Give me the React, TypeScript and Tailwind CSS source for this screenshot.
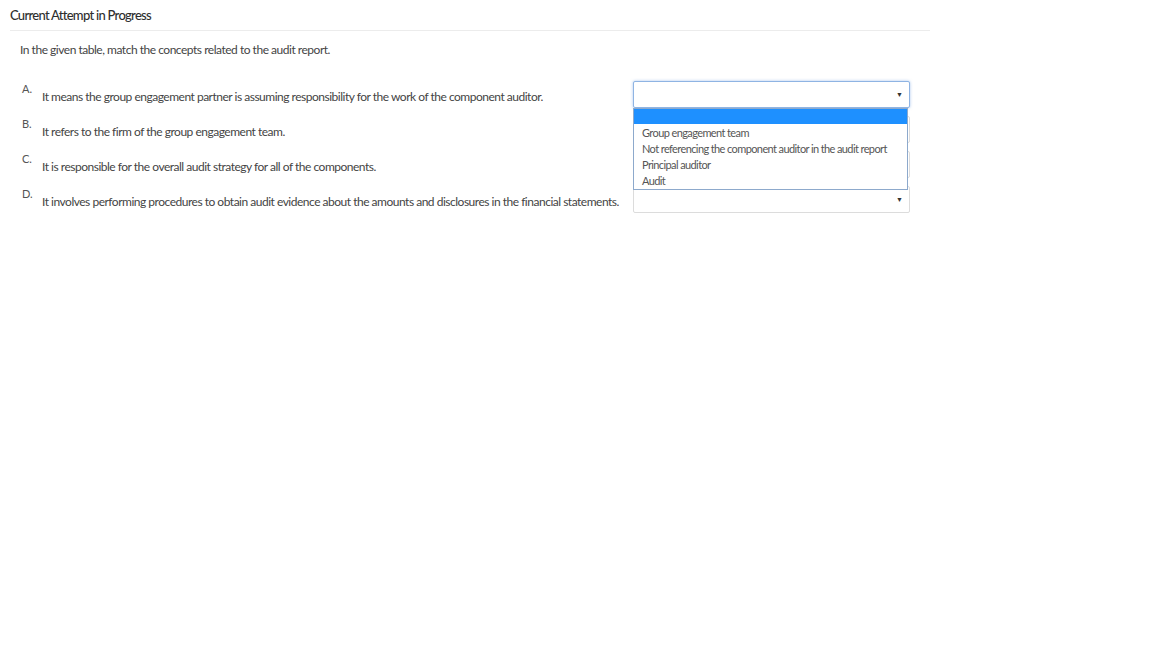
import React from "react";

const rows = [
  { l: "A.", t: "It means the group engagement partner is assuming responsibility for the work of the component auditor." },
  { l: "B.", t: "It refers to the firm of the group engagement team." },
  { l: "C.", t: "It is responsible for the overall audit strategy for all of the components." },
  { l: "D.", t: "It involves performing procedures to obtain audit evidence about the amounts and disclosures in the financial statements." },
];

const options = [
  "Group engagement team",
  "Not referencing the component auditor in the audit report",
  "Principal auditor",
  "Audit",
];

function Caret() {
  return <span className="text-[7px] text-[#333] leading-none">▼</span>;
}

export default function App() {
  return (
    <div className="w-[1152px] h-[648px] bg-white text-[#333] font-['Lato','Liberation_Sans',sans-serif]">
      <div className="w-[930px] pl-[10px]">
        <div className="h-[31px] border-b border-[#ececec] pt-[6px] text-[13px] font-medium tracking-[-0.055em] text-[#2e2e2e]">
          Current Attempt in Progress
        </div>
        <div className="pl-[10px] pt-[10px] text-[12px] tracking-[-0.04em] text-[#444]">
          In the given table, match the concepts related to the audit report.
        </div>
        <div className="relative mt-[22px] flex flex-col gap-[8px] pl-[12px]">
          {rows.map((r, i) => (
            <div key={r.l} className="flex h-[27px] items-center">
              <div className="flex h-full w-[611px] items-start">
                <span className="w-[20px] text-[11px] text-[#555]">{r.l}</span>
                <span className="pt-[7px] text-[12px] tracking-[-0.041em] text-[#444]">{r.t}</span>
              </div>
              <div
                className={
                  "flex h-[27px] w-[277px] items-center justify-end rounded-[2px] border bg-white pr-[6px] " +
                  (i === 0 ? "border-[#8fb4e3] shadow-[0_0_3px_rgba(80,140,220,0.5)]" : "border-[#dcdcdc]")
                }
              >
                <Caret />
              </div>
            </div>
          ))}
          <div className="absolute left-[623px] top-[27px] w-[275px] border border-[#8da9cc] bg-white">
            <div className="h-[15px] bg-[#1e90ff]" />
            <div className="flex flex-col pl-[8px] pt-[1px] text-[11px] leading-[16px] tracking-[-0.055em] text-[#555]">
              {options.map((o) => (
                <div key={o}>{o}</div>
              ))}
            </div>
          </div>
        </div>
      </div>
    </div>
  );
}
